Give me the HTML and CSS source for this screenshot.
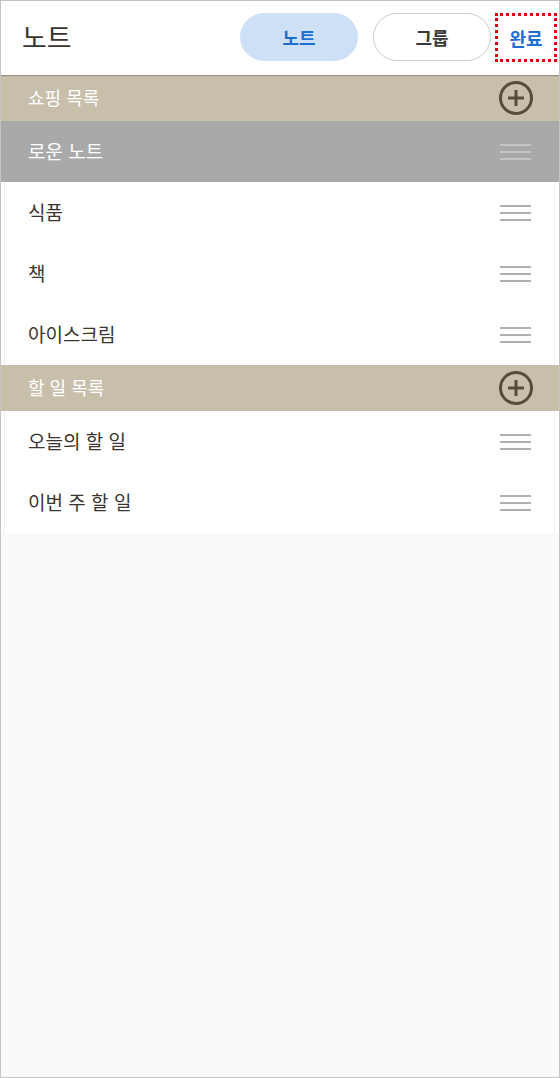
FILE: index.html
```html
<!DOCTYPE html>
<html lang="ko">
<head>
<meta charset="utf-8">
<title>노트</title>
<link rel="stylesheet" href="styles.css">
</head>
<body>
<div class="screen">
  <header class="topbar">
    <h1 class="title">노트</h1>
    <div class="tabs">
      <button class="tab tab-active">노트</button>
      <button class="tab">그룹</button>
    </div>
    <button class="done">완료</button>
  </header>
  <main class="list">
    <div class="section">
      <span>쇼핑 목록</span>
      <svg class="plus" viewBox="0 0 36 36" width="36" height="36"><circle cx="18" cy="18" r="15.5" fill="none" stroke="#574c3a" stroke-width="3"/><path d="M18 10v16M10 18h16" stroke="#574c3a" stroke-width="3" fill="none"/></svg>
    </div>
    <div class="row row-selected"><span>로운 노트</span><i class="grip"></i></div>
    <div class="row"><span>식품</span><i class="grip"></i></div>
    <div class="row"><span>책</span><i class="grip"></i></div>
    <div class="row"><span>아이스크림</span><i class="grip"></i></div>
    <div class="section">
      <span>할 일 목록</span>
      <svg class="plus" viewBox="0 0 36 36" width="36" height="36"><circle cx="18" cy="18" r="15.5" fill="none" stroke="#574c3a" stroke-width="3"/><path d="M18 10v16M10 18h16" stroke="#574c3a" stroke-width="3" fill="none"/></svg>
    </div>
    <div class="row"><span>오늘의 할 일</span><i class="grip"></i></div>
    <div class="row"><span>이번 주 할 일</span><i class="grip"></i></div>
  </main>
</div>
</body>
</html>
```

FILE: styles.css
```css
* { box-sizing: border-box; }
html, body { margin: 0; padding: 0; }
body {
  width: 560px;
  height: 1078px;
  font-family: "Noto Sans CJK KR", "Noto Sans", sans-serif;
  background: #fff;
}
.screen {
  width: 560px;
  height: 1078px;
  border: 1px solid #c4c4c4;
  background: #f9f9f9;
  display: flex;
  flex-direction: column;
  overflow: hidden;
}
.topbar {
  height: 74px;
  flex: none;
  background: #fff;
  display: flex;
  align-items: center;
  padding-left: 21px;
  box-shadow: 0 1px 1px rgba(0,0,0,0.25);
  position: relative;
  z-index: 1;
}
.title {
  margin: 0;
  font-size: 27px;
  font-weight: 400;
  color: #3b3530;
  flex: 1;
  line-height: 1;
  margin-top: -4px;
}
.tabs {
  display: flex;
  gap: 15px;
  margin-top: -2px;
}
.tab {
  width: 118px;
  height: 48px;
  border-radius: 24px;
  border: 1px solid #cfcfcf;
  background: #fff;
  font-family: inherit;
  font-size: 18px;
  font-weight: 700;
  color: #3a3a3a;
  padding: 0;
}
.tab-active {
  background: #cde0f6;
  border-color: #cde0f6;
  color: #1f6fd1;
}
.done {
  width: 62px;
  height: 49px;
  margin: 0 2px 0 4px;
  border: 3px dotted #e3000f;
  background: #fff;
  font-family: inherit;
  font-size: 18px;
  font-weight: 700;
  color: #1f6fd1;
  padding: 0;
  margin-top: -1px;
}
.list {
  display: flex;
  flex-direction: column;
}
.section {
  height: 46px;
  background: #c8bfab;
  color: #fff;
  font-size: 18px;
  display: flex;
  align-items: center;
  justify-content: space-between;
  padding: 0 25px 0 27px;
}
.section span { margin-top: -2px; }
.plus { display: block; }
.row {
  height: 61px;
  background: #fff;
  display: flex;
  align-items: center;
  justify-content: space-between;
  padding: 0 24px 0 27px;
  font-size: 19px;
  color: #3b3530;
  border-left: 3px solid #fff;
  border-right: 4px solid #fff;
  box-shadow: inset 1px 0 0 #f0f0f0, inset -1px 0 0 #f0f0f0;
  margin: 0;
}
.row span { margin-top: -2px; margin-left: -3px; }
.row-selected {
  background: #a9a9a9;
  color: #fff;
  border-color: #a9a9a9;
  box-shadow: none;
}
.grip {
  width: 31px;
  height: 16px;
  display: block;
  background:
    linear-gradient(#b0b0b0, #b0b0b0) 0 0 / 100% 2px no-repeat,
    linear-gradient(#b0b0b0, #b0b0b0) 0 7px / 100% 2px no-repeat,
    linear-gradient(#b0b0b0, #b0b0b0) 0 14px / 100% 2px no-repeat;
}
.row-selected .grip {
  background:
    linear-gradient(#c4c4c4, #c4c4c4) 0 0 / 100% 2px no-repeat,
    linear-gradient(#c4c4c4, #c4c4c4) 0 7px / 100% 2px no-repeat,
    linear-gradient(#c4c4c4, #c4c4c4) 0 14px / 100% 2px no-repeat;
}
```
